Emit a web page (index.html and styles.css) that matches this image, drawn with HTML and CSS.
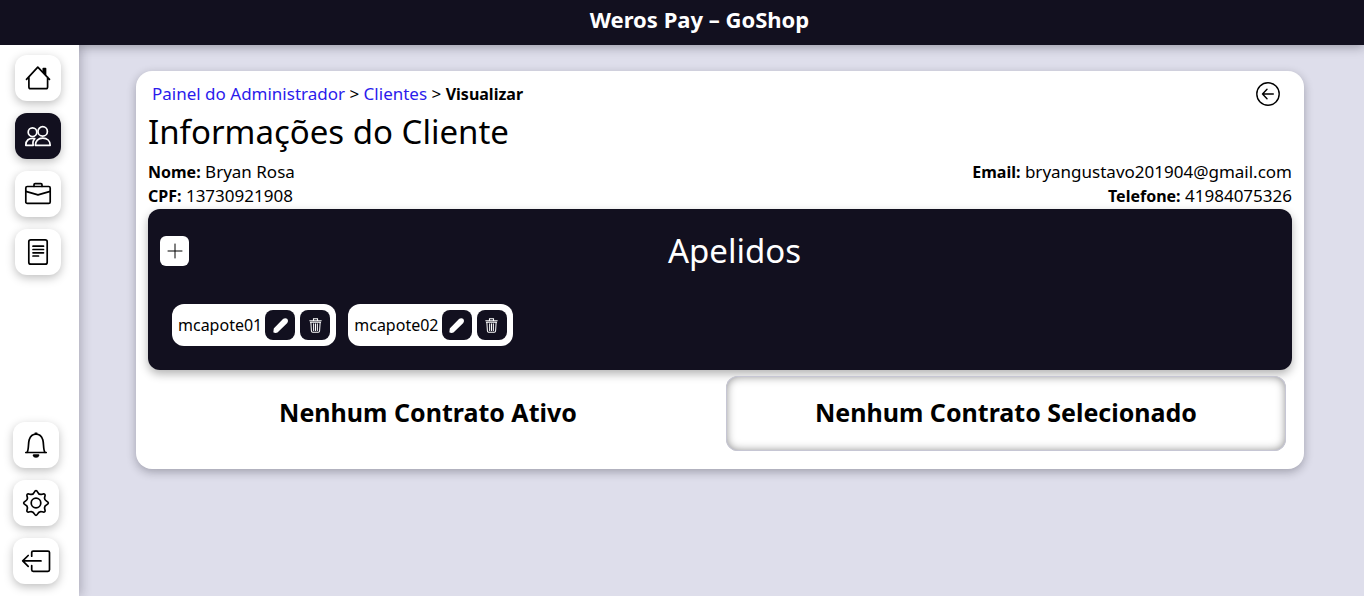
FILE: index.html
```html
<!DOCTYPE html>
<html lang="pt-BR">
<head>
<meta charset="utf-8">
<meta name="viewport" content="width=device-width, initial-scale=1">
<title>Weros Pay – GoShop</title>
<link rel="stylesheet" href="styles.css">
</head>
<body>
<svg class="sprite" aria-hidden="true">
  <symbol id="pencil" viewBox="0 0 16 16"><path d="M1.200 14.800 1.600 11.600 11 1.800Q13 .5 14.600 1.500 15.800 3.200 14.400 5L4.800 14.400Q3 15.500 1.200 14.800Z" fill="currentColor" stroke="currentColor" stroke-width="1.600" stroke-linejoin="round"/></symbol>
  <symbol id="trash" viewBox="0 0 14 16"><path d="M.8 2.800H13.200M4.800 2.500V.8H9.200V2.500M2 4.500 2.600 14Q2.700 15.300 4 15.300H10Q11.300 15.300 11.400 14L12 4.500M1.500 4.500H12.500M5 6V13.500M7 6V13.500M9 6V13.500" fill="none" stroke="currentColor" stroke-width="1.1" stroke-linecap="round"/></symbol>
</svg>
<header class="topbar"><h1 class="brand">Weros Pay – GoShop</h1></header>
<div class="layout">
  <nav class="sidebar" aria-label="Menu">
    <div class="nav-group">
      <a class="nav-button" href="#" aria-label="Início"><svg class="icon" viewBox="0 0 26 26"><path d="M1.500 14.300 12.800 2.200 24.500 14.300M3.900 12V22Q3.900 23.700 5.600 23.700H20.900Q22.600 23.700 22.600 22V12"/><path d="M18.300 7V3.500H20.500V9.500Z" fill="currentColor"/></svg></a>
      <a class="nav-button nav-button-active" href="#" aria-label="Clientes"><svg class="icon" viewBox="0 0 26 26"><circle cx="7.500" cy="9.200" r="4.300"/><circle cx="17.700" cy="8.400" r="4.700"/><path d="M10.400 22.300C10.400 17.900 13.200 15.200 17.700 15.200S25.200 17.900 25.200 22.300ZM8.200 22.300H.8C.8 17.500 3.600 14.600 9.800 15.600Q7.200 18 8.200 22.300Z"/></svg></a>
      <a class="nav-button" href="#" aria-label="Contratos"><svg class="icon" viewBox="0 0 26 26"><rect x=".8" y="5.500" width="24.400" height="16.900" rx="1.500"/><path d="M9 5.300V3.700Q9 2.600 10.100 2.600H15.900Q17 2.600 17 3.700V5.300M.8 10.400 13 13.900 25.200 10.400"/></svg></a>
      <a class="nav-button" href="#" aria-label="Relatórios"><svg class="icon" viewBox="0 0 26 26"><rect x="3.800" y=".8" width="18.400" height="24.400" rx="2"/><path d="M8 7.200H18.500M8 10.500H18.500M8 13.800H18.500M8 17H13.500"/></svg></a>
    </div>
    <div class="nav-group nav-group-bottom">
      <a class="nav-button" href="#" aria-label="Notificações"><svg class="icon" viewBox="0 0 26 26"><path d="M2.800 20.500H23.200M4 20.500C6 17.500 5 12 6.200 7.800Q8 2.200 13 2.200T19.800 7.800C21 12 20 17.500 22 20.500M12.200 1.300H13.800"/><path d="M10.500 23.200H15.500Q15 25 13 25T10.500 23.200Z" fill="currentColor"/></svg></a>
      <a class="nav-button" href="#" aria-label="Configurações"><svg class="icon" viewBox="0 0 26 26"><circle cx="13" cy="13" r="4.800"/><path d="M11.200 2.300Q13-1 14.800 2.300 16.060 5.200 19.200 4.200 23 3 21.800 6.800 20.800 9.940 23.700 11.200 27 13 23.700 14.800 20.800 16.060 21.800 19.200 23 23 19.200 21.800 16.060 20.800 14.800 23.700 13 27 11.200 23.700 9.940 20.800 6.800 21.800 3 23 4.200 19.200 5.200 16.060 2.300 14.800-1 13 2.300 11.200 5.200 9.940 4.200 6.800 3 3 6.800 4.200 9.940 5.200 11.200 2.300Z"/></svg></a>
      <a class="nav-button" href="#" aria-label="Sair"><svg class="icon" viewBox="0 0 26 26"><path d="M8.700 8.200V4.600Q8.700 3.100 10.200 3.100H25Q26.500 3.100 26.500 4.600V21.800Q26.500 23.300 25 23.300H10.200Q8.700 23.300 8.700 21.800V17.600M18 12.900H0M5.200 7.500-.3 12.900 5.200 18.300"/></svg></a>
    </div>
  </nav>
  <main class="main">
    <section class="card">
      <div class="card-top">
        <nav class="breadcrumb" aria-label="Trilha"><a href="#">Painel do Administrador</a> &gt; <a href="#">Clientes</a> &gt; <strong>Visualizar</strong></nav>
        <button class="back" type="button" aria-label="Voltar"><svg viewBox="0 0 24 24"><circle cx="12" cy="12" r="11.200"/><path d="M17.300 12H6.500M11 7.300 6.500 12 11 16.700"/></svg></button>
      </div>
      <h2 class="title">Informações do Cliente</h2>
      <div class="info">
        <div><p><strong>Nome:</strong> Bryan Rosa</p><p><strong>CPF:</strong> 13730921908</p></div>
        <div class="info-right"><p><strong>Email:</strong> bryangustavo201904@gmail.com</p><p><strong>Telefone:</strong> 41984075326</p></div>
      </div>
      <section class="aliases">
        <div class="aliases-head">
          <button class="add" type="button" aria-label="Adicionar apelido"><svg viewBox="0 0 14 14"><path d="M0 7H14M7 0V14"/></svg></button>
          <h3 class="aliases-title">Apelidos</h3>
        </div>
        <ul class="chips">
          <li class="chip"><span class="chip-name">mcapote01</span><button class="chip-button" type="button" aria-label="Editar mcapote01"><svg class="pencil"><use href="#pencil"/></svg></button><button class="chip-button" type="button" aria-label="Excluir mcapote01"><svg class="trash"><use href="#trash"/></svg></button></li>
          <li class="chip"><span class="chip-name">mcapote02</span><button class="chip-button" type="button" aria-label="Editar mcapote02"><svg class="pencil"><use href="#pencil"/></svg></button><button class="chip-button" type="button" aria-label="Excluir mcapote02"><svg class="trash"><use href="#trash"/></svg></button></li>
        </ul>
      </section>
      <div class="contracts">
        <h3 class="contract">Nenhum Contrato Ativo</h3>
        <h3 class="contract contract-selected">Nenhum Contrato Selecionado</h3>
      </div>
    </section>
  </main>
</div>
</body>
</html>
```

FILE: styles.css
```css
* { box-sizing: border-box; margin: 0; padding: 0; }
body {
  min-height: 100vh;
  display: flex;
  flex-direction: column;
  font: 17px/24px "Lucida Sans Unicode", "Noto Sans", sans-serif;
  color: #000;
  background: #dedeeb;
}
strong { font-size: 16px; line-height: 20px; }
button { border: 0; background: none; color: inherit; cursor: pointer; }
svg { display: block; overflow: visible; }
.sprite { position: absolute; width: 0; height: 0; }

.topbar {
  position: relative;
  z-index: 2;
  display: flex;
  justify-content: center;
  padding: 3px 0 10px 35px;
  background: #12101f;
  color: #fff;
  box-shadow: 0 2px 10px rgba(18, 16, 31, .35);
}
.brand { font-size: 22px; line-height: 32px; }

.layout { flex: 1; display: flex; }
.sidebar {
  position: relative;
  z-index: 3;
  width: 79px;
  display: flex;
  flex-direction: column;
  justify-content: space-between;
  padding: 10px 15px 12px;
  background: #fff;
  box-shadow: 2px 0 10px rgba(18, 16, 31, .25);
  clip-path: inset(0 -20px 0 0);
}
.nav-group { display: flex; flex-direction: column; gap: 12px; }
.nav-group-bottom { margin-left: -2px; }
.nav-button {
  width: 46px;
  height: 46px;
  display: grid;
  place-items: center;
  border-radius: 12px;
  background: #fff;
  color: #000;
  box-shadow: 0 3px 10px rgba(0, 0, 0, .25);
}
.nav-button-active { background: #12101f; color: #fff; }
.icon {
  width: 26px;
  height: 26px;
  fill: none;
  stroke: currentColor;
  stroke-width: 1.7;
  stroke-linecap: round;
  stroke-linejoin: round;
}

.main { flex: 1; padding: 26px 60px 26px 57px; }
.card {
  padding: 11px 12px 18px;
  border-radius: 16px;
  background: #fff;
  box-shadow: 0 3px 10px rgba(18, 16, 31, .3);
}
.card-top { display: flex; align-items: flex-end; justify-content: space-between; padding: 0 12px 0 4px; }
.breadcrumb a { color: #2b1bec; text-decoration: none; }
.back { width: 24px; height: 24px; }
.back svg, .add svg { fill: none; stroke: currentColor; stroke-width: 1.4; stroke-linecap: round; stroke-linejoin: round; }
.title { font-size: 33px; line-height: 52px; font-weight: 400; }
.info { display: flex; justify-content: space-between; padding: 2px 0 1px; }
.info-right { text-align: right; }

.aliases {
  padding: 18px 12px 24px;
  border-radius: 12px;
  background: #12101f;
  color: #fff;
  box-shadow: 0 4px 10px rgba(0, 0, 0, .3);
}
.aliases-head { display: flex; align-items: center; }
.add { width: 29px; height: 30px; display: grid; place-items: center; border-radius: 6px; background: #fff; color: #000; }
.add svg { width: 14px; height: 14px; stroke-width: 1; }
.aliases-title { flex: 1; font-size: 33px; line-height: 48px; font-weight: 400; text-align: center; }
.chips { display: flex; flex-wrap: wrap; gap: 12px; padding: 29px 12px 0; list-style: none; font-size: 16px; }
.chip { display: flex; align-items: center; gap: 5px; padding: 6px; border-radius: 12px; background: #fff; color: #000; }
.chip-name { min-width: 82px; }
.chip-button { width: 30px; height: 30px; display: grid; place-items: center; border-radius: 8px; background: #12101f; color: #fff; }
.chip-name + .chip-button { margin-left: -2px; }
.pencil { width: 15px; height: 15px; }
.trash { width: 13px; height: 15px; }

.contracts { display: grid; grid-template-columns: 1fr 1fr; gap: 18px; padding: 6px 6px 0 0; }
.contract { padding: 18px 0 21px; font-size: 25px; line-height: 36px; text-align: center; }
.contract-selected { border-radius: 12px; background: #fff; box-shadow: inset 0 0 0 1px #c6c6d4, inset 0 0 10px rgba(0, 0, 0, .5); }
```
